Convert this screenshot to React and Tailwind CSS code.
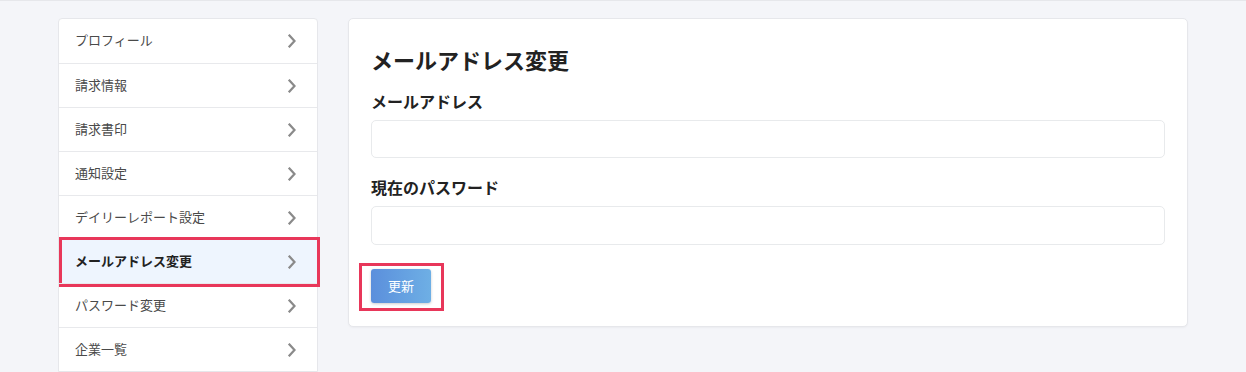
import React from "react";

const items = [
  "プロフィール",
  "請求情報",
  "請求書印",
  "通知設定",
  "デイリーレポート設定",
  "メールアドレス変更",
  "パスワード変更",
  "企業一覧",
];

function Chevron() {
  return (
    <svg width="10" height="14" viewBox="0 0 10 14" fill="none">
      <path d="M2.5 1.5 L7.5 7 L2.5 12.5" stroke="#8a8a8a" strokeWidth="2.2" strokeLinecap="square" strokeLinejoin="miter" />
    </svg>
  );
}

export default function App() {
  return (
    <div
      className="w-[1246px] h-[372px] overflow-hidden bg-[#f4f5f9] border-t border-[#e6e7eb]"
      style={{ fontFamily: '"Noto Sans CJK JP", "Noto Sans", sans-serif' }}
    >
      <div className="flex gap-[30px] pl-[58px] pt-[17px]">
        <div className="w-[260px] shrink-0 bg-white border border-[#e6e7eb] rounded-t-[4px]">
          {items.map((label, i) => {
            const active = i === 5;
            return (
              <div
                key={label}
                className={
                  "relative h-[44px] flex items-center justify-between pl-[16px] pr-[20px] " +
                  (i > 0 ? "border-t border-[#e8e9ec] " : "") +
                  (active ? "bg-[#eef5fe]" : "")
                }
              >
                <span
                  className={
                    "-mt-[3px] text-[13px] leading-none " +
                    (active ? "font-bold text-[#222]" : "text-[#4a4a4a]")
                  }
                >
                  {label}
                </span>
                <span className="flex">
                  <Chevron />
                </span>
                {active && (
                  <div className="absolute left-[0px] right-[-3px] top-[-3px] bottom-[-4px] border-[3px] border-[#e8375a] pointer-events-none" />
                )}
              </div>
            );
          })}
        </div>
        <div className="w-[840px] h-[309px] shrink-0 bg-white border border-[#e6e7eb] rounded-[5px] px-[22px] pt-[24px] shadow-[0_1px_2px_rgba(0,0,0,0.04)]">
          <h1 className="text-[22px] font-bold text-[#222] leading-[32px]">メールアドレス変更</h1>
          <div className="mt-[14px] text-[16px] font-bold text-[#222] leading-[24px]">メールアドレス</div>
          <div className="mt-[7px] h-[38px] w-[794px] border border-[#e8eaec] rounded-[5px]" />
          <div className="mt-[17px] text-[16px] font-bold text-[#222] leading-[24px]">現在のパスワード</div>
          <div className="mt-[7px] h-[39px] w-[794px] border border-[#e8eaec] rounded-[5px]" />
          <div className="relative mt-[24px] w-[60px] h-[34px]">
            <button className="w-[60px] h-[34px] rounded-[3px] bg-gradient-to-r from-[#5b8fdc] to-[#6eafe5] text-white text-[13px] shadow-[0_1px_3px_rgba(0,0,0,0.2)]">
              更新
            </button>
            <div className="absolute left-[-12px] top-[-6px] w-[85px] h-[48px] border-[3px] border-[#e8375a] pointer-events-none" />
          </div>
        </div>
      </div>
    </div>
  );
}
